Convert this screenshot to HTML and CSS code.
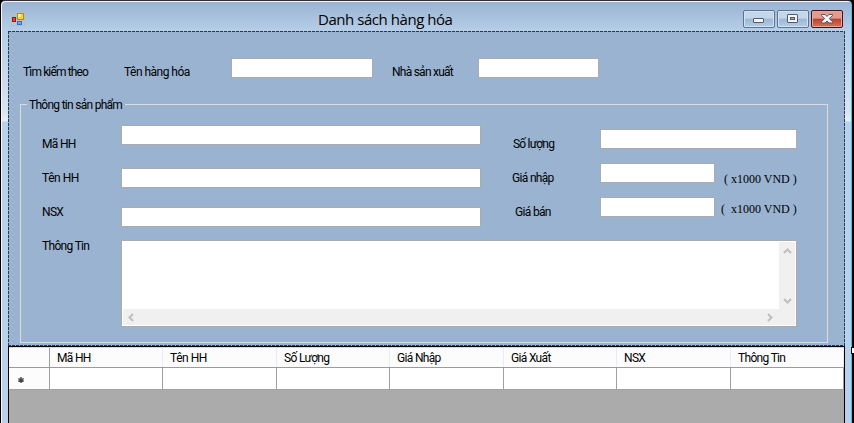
FILE: index.html
```html
<!DOCTYPE html>
<html lang="vi">
<head>
<meta charset="utf-8">
<title>Danh sách hàng hóa</title>
<link rel="stylesheet" href="styles.css">
</head>
<body>
<div class="window">
  <header class="titlebar">
    <svg class="app-icon" width="14" height="14" viewBox="0 0 14 14">
      <rect x=".5" y=".5" width="13" height="13" fill="none" stroke="#b9bcc0"/>
      <rect x="6.5" y="1.5" width="6" height="6" fill="#fbd040" stroke="#b78a14"/>
      <rect x="7" y="2" width="3" height="3" fill="#ffe98a"/>
      <rect x="1.500" y="5.500" width="3" height="4" fill="#e0483a" stroke="#9c1410"/>
      <rect x="6.500" y="9.500" width="4" height="3" fill="#6fa4f2" stroke="#3a6cc4"/>
    </svg>
    <h1 class="title"><span>Danh sách hàng hóa</span></h1>
    <div class="controls">
      <div class="ctl"><svg width="30" height="16" viewBox="0 0 30 16"><rect x="9.500" y="7.500" width="10" height="4" rx=".5" fill="#f4f4f4" stroke="#555b6e"/></svg></div>
      <div class="ctl"><svg width="30" height="16" viewBox="0 0 30 16"><rect x="9.500" y="3.500" width="10" height="8" rx=".5" fill="#f4f4f4" stroke="#555b6e"/><rect x="12.500" y="6.500" width="4" height="2" fill="#8fb0d4" stroke="#555b6e"/></svg></div>
      <div class="ctl close"><svg width="30" height="16" viewBox="0 0 30 16"><path d="M9.500 3.500h3.500l2 2 2-2h3.500v1.200L17.300 7.500l3.200 3.300V12H17l-2-2-2 2H9.500v-1.200l3.200-3.300-3.200-2.800z" fill="#f6f6f6" stroke="#545768"/></svg></div>
    </div>
  </header>
  <main class="client">
    <section class="form">
      <div class="search">
        <span class="t s1">Tìm kiếm theo</span>
        <span class="t s2">Tên hàng hóa</span>
        <div class="input in-a"></div>
        <span class="t s3">Nhà sản xuất</span>
        <div class="input in-b"></div>
      </div>
      <div class="group">
        <div class="legend"><span class="t">Thông tin sản phẩm</span></div>
        <div class="group-body">
          <div class="labels">
            <span class="t">Mã HH</span><span class="t wide">Tên HH</span><span class="t">NSX</span><span class="t">Thông Tin</span>
          </div>
          <div class="fields">
            <div class="columns">
              <div class="left">
                <div class="input"></div><div class="input second"></div><div class="input third"></div>
              </div>
              <div class="labels right-labels">
                <span class="t qty">Số lượng</span><span class="t buy">Giá nhập</span><span class="t sell">Giá bán</span>
              </div>
              <div class="right">
                <div class="input"></div>
                <div class="price">
                  <div class="prices"><div class="input"></div><div class="input"></div></div>
                  <div class="units"><span class="u1">( x1000 VND )</span><span class="u2">(&nbsp; x1000 VND )</span></div>
                </div>
              </div>
            </div>
            <div class="textarea">
              <div class="blank"></div>
              <div class="vbar">
                <svg width="9" height="6" viewBox="0 0 9 6"><path d="M1 5l3.500-3.500L8 5" /></svg>
                <svg width="9" height="6" viewBox="0 0 9 6"><path d="M1 1l3.500 3.500L8 1" /></svg>
              </div>
              <div class="hbar">
                <svg width="6" height="9" viewBox="0 0 6 9"><path d="M5 1L1.500 4.500 5 8" /></svg>
                <svg width="6" height="9" viewBox="0 0 6 9"><path d="M1 1l3.500 3.500L1 8" /></svg>
              </div>
            </div>
          </div>
        </div>
      </div>
    </section>
    <section class="grid">
      <div class="row head">
        <div></div><div><span class="t">Mã HH</span></div><div><span class="t wide">Tên HH</span></div><div><span class="t">Số Lượng</span></div><div><span class="t">Giá Nhập</span></div><div><span class="t">Giá Xuất</span></div><div><span class="t">NSX</span></div><div><span class="t">Thông Tin</span></div>
      </div>
      <div class="row cells">
        <div class="marker"><svg width="6" height="6" viewBox="0 0 6 6"><path d="M3 0v6M.3 1.600l5.400 2.800M.3 4.400l5.400-2.800" stroke="#444" stroke-width="1.400"/></svg></div><div></div><div></div><div></div><div></div><div></div><div></div><div></div>
      </div>
    </section>
  </main>
  <i class="handle"></i>
</div>
</body>
</html>
```
FILE: styles.css
```css
* { box-sizing: border-box; }
html, body { margin: 0; height: 100%; overflow: hidden; background: #000; }
body { font: 12px/16px Roboto, sans-serif; color: #000; }
svg { display: block; }
.window {
  position: relative;
  width: 853px; height: 423px;
  border-left: 1px solid #000;
  border-top: 1px solid #2f2b38;
  border-right: 1px solid #000;
  border-radius: 5px 5px 0 0;
  box-shadow: inset 1px 1px 0 #f4f8fc, inset -1px 0 0 #3cc3ea;
  background: linear-gradient(#99b3d1 0, #b5cde7 29px, #d7e4f2 110px, #e6eef7 120px, #b9d1ea 121px);
}
.titlebar { display: flex; height: 30px; padding: 9px 9px 0 10px; }
.app-icon { margin-top: 2px; }
.title { flex: 1; margin: -1px 0 0; padding-left: 293px; font: 400 15px/20px "Open Sans", sans-serif; white-space: nowrap; }
.title span { letter-spacing: -.45px; }
.controls { display: flex; gap: 2px; }
.ctl {
  width: 32px; height: 18px;
  border: 1px solid #5e7391; border-radius: 2px;
  box-shadow: inset 0 0 0 1px #d5e3f2;
  background: linear-gradient(#c3d6ea 0 45%, #9cb7d4 50%, #b5cde6);
}
.close { border-color: #4b0f1b; box-shadow: inset 0 0 0 1px #e5a89e; background: linear-gradient(#e39b8e 0 45%, #bd3f2b 50%, #d0755c); }
.client { margin: 0 7px; height: 392px; }
.form {
  height: 315px;
  background:
    repeating-linear-gradient(90deg, #1f3a5c 0 3px, transparent 3px 4px) 0 0 / 100% 1px no-repeat,
    repeating-linear-gradient(90deg, #1f3a5c 0 3px, transparent 3px 4px) 0 100% / 100% 1px no-repeat,
    repeating-linear-gradient(#1f3a5c 0 3px, transparent 3px 4px) 0 0 / 1px 100% no-repeat,
    repeating-linear-gradient(#1f3a5c 0 3px, transparent 3px 4px) 100% 0 / 1px 100% no-repeat,
    #99b3d1;
}
.t { white-space: nowrap; letter-spacing: -.68px; }
.wide { letter-spacing: -.45px; }
.input { height: 20px; background: #fff; border: 1px solid #ababab; }
.search { display: flex; height: 66px; padding: 27px 0 0 15px; }
.search .t { margin-top: 6px; }
.s1 { width: 101px; letter-spacing: -.87px; }
.s2 { width: 107px; letter-spacing: -.52px; }
.in-a { width: 142px; margin-right: 19px; }
.s3 { width: 86px; letter-spacing: -.75px; }
.in-b { width: 121px; }
.group { width: 808px; margin: 0 0 0 12px; }
.legend { display: flex; align-items: center; height: 16px; }
.legend::before, .legend::after { content: ""; height: 1px; background: #dcdcdc; margin-top: -1px; }
.legend::before { width: 7px; }
.legend::after { flex: 1; }
.legend .t { width: 98px; padding-left: 2px; letter-spacing: -.72px; }
.group-body { display: flex; height: 238px; margin-top: -8px; border: 1px solid #dcdcdc; border-top: 0; padding-left: 21px; }
.labels { display: flex; flex-direction: column; gap: 18px; padding-top: 31px; width: 79px; }
.fields { width: 676px; padding-top: 20px; }
.columns { display: flex; height: 115px; }
.left { width: 360px; }
.second { margin-top: 23px; }
.third { margin-top: 19px; }
.right-labels { width: 119px; padding: 11px 0 0 32px; }
.qty { letter-spacing: -.8px; }
.buy { margin-left: -1px; }
.sell { margin-left: 2px; }
.right { width: 197px; padding-top: 4px; }
.price { display: flex; margin-top: 14px; }
.prices { display: grid; gap: 14px; width: 115px; }
.units { display: flex; flex-direction: column; gap: 14px; padding-top: 8px; white-space: pre; font: 12px/16px "Liberation Serif", serif; }
.u1 { margin-left: 9px; }
.u2 { margin-left: 6px; }
.textarea { display: grid; grid-template: 67px 16px / 1fr 16px; height: 87px; padding: 1px; border: 1px solid #ababab; background: #fff; }
.vbar, .hbar { display: flex; justify-content: space-between; align-items: center; background: #f0f0f0; }
.vbar { flex-direction: column; padding: 6px 0 5px; }
.hbar { grid-column: 1 / 3; padding: 0 22px 0 5px; }
.textarea path { fill: none; stroke: #bfbfbf; stroke-width: 2; }
.grid { height: 77px; border: 1px solid #000; border-bottom: 0; background: #ababab; }
.row { display: grid; grid-template-columns: 41px 113px 114px 113px 114px 113px 114px 113px; background: #fcfcfc; }
.head { height: 21px; border-bottom: 1px solid #9b9b9f; border-top: 1px solid #d9d9d9; }
.head div { border-right: 1px solid #e5edf9; padding: 2px 0 0 7px; }
.head div:first-child { border-color: #a0a0a0; }
.cells { height: 22px; border-bottom: 1px solid #a0a0a0; background: #fff; }
.cells div { border-right: 1px solid #a0a0a0; }
.cells .marker { background: #fcfcfc; padding: 9px 0 0 9px; }
.handle { position: absolute; left: 850px; top: 346px; width: 6px; height: 7px; border: 1px solid #000; background: #fff; }
```
